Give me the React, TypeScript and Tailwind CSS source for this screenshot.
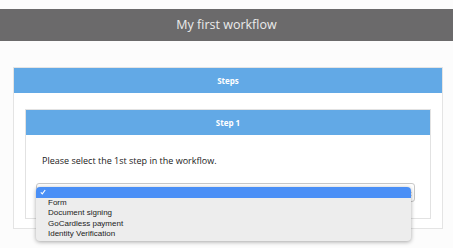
export default function App() {
  const options = ["Form", "Document signing", "GoCardless payment", "Identity Verification"]

  return (
    <div className="w-[453px] h-[248px] bg-[#fcfcfc] overflow-hidden font-['Open_Sans',sans-serif]">
      <div className="pt-[9px]">
        <div className="h-[32px] bg-[#6b6a6b] flex items-center justify-center text-[#ececec] text-[12.5px]">
          My first workflow
        </div>
      </div>

      <div className="pl-[13px] pt-[26px]">
        <div className="w-[430px] border border-[#e4e4e4] bg-white">
          <div className="h-[25px] bg-[#62a9e6] flex items-center justify-center text-white text-[8px] font-bold">
            Steps
          </div>
          <div className="px-[11px] pt-[16px] pb-[9px]">
            <div className="border border-[#e2e2e2] bg-white">
              <div className="h-[25px] bg-[#62a9e6] flex items-center justify-center text-white text-[8px] font-bold">
                Step 1
              </div>
              <div className="pt-[19px] pb-[16px]">
                <p className="pl-[16px] text-[9px] leading-[14px] text-[#222]">
                  Please select the 1st step in the workflow.
                </p>
                <div className="relative ml-[10px] mr-[15px] mt-[15px] h-[19px] rounded-[3px] border border-[#c8c8c8] bg-white">
                  {/* select arrows */}
                  <svg className="absolute right-[2px] top-[6px]" width="5" height="8" viewBox="0 0 5 8">
                    <path d="M0.5 3 L2.5 0.5 L4.5 3 Z" fill="#333" />
                    <path d="M0.5 5 L2.5 7.5 L4.5 5 Z" fill="#333" />
                  </svg>

                  {/* open dropdown list */}
                  <div className="absolute left-[-1px] top-[3px] w-[375px] bg-[#ededed] rounded-[4px] shadow-[0_1px_4px_rgba(0,0,0,0.35)] pb-[1px] font-['Liberation_Sans',sans-serif] text-[8px] text-[#222] leading-[10.5px] z-10">
                    <div className="h-[10.5px] bg-[#4a8ff6] rounded-t-[4px] text-white pl-[4px] flex items-center">
                      <svg width="6" height="6" viewBox="0 0 6 6">
                        <path d="M0.8 3.3 L2.3 4.8 L5.2 1" stroke="white" strokeWidth="1.1" fill="none" />
                      </svg>
                    </div>
                    {options.map((o) => (
                      <div key={o} className="pl-[12px]">
                        {o}
                      </div>
                    ))}
                  </div>
                </div>
              </div>
            </div>
          </div>
        </div>
      </div>
    </div>
  )
}
